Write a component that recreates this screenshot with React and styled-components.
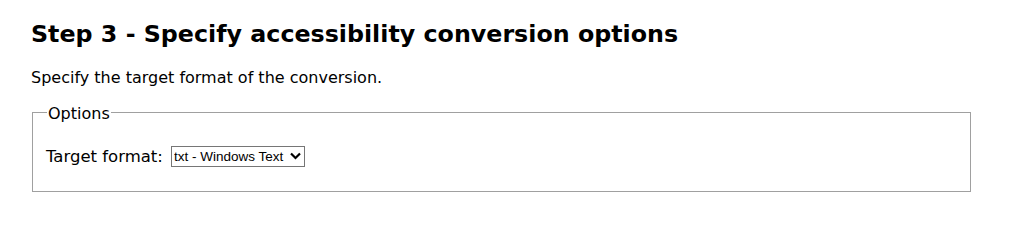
import React from "react"
import styled, { createGlobalStyle } from "styled-components"

const GlobalStyle = createGlobalStyle`
  html, body {
    margin: 0;
    padding: 0;
    background: #ffffff;
  }
  body {
    font-family: Verdana, "DejaVu Sans", sans-serif;
    color: #000000;
  }
`

const Page = styled.div`
  padding: 16px 55px 0 31px;
`

const Title = styled.h2`
  margin: 0;
  font-size: 23.75px;
  line-height: 36px;
  font-weight: bold;
`

const Intro = styled.p`
  margin: 16px 0 13px;
  font-size: 16px;
  line-height: 20px;
`

const Options = styled.fieldset`
  margin: 0 0 0 1px;
  padding: 23px 13px 24px;
  border: 1px solid #a0a0a0;
`

const Legend = styled.legend`
  padding: 4px 1px 0;
  margin-left: 1px;
  font-size: 16px;
  line-height: 18px;
`

const Row = styled.div`
  display: flex;
  align-items: center;
  gap: 8px;
  font-size: 16.5px;
`

const SelectWrap = styled.span`
  position: relative;
  display: inline-flex;
`

const Select = styled.select`
  appearance: none;
  height: 21px;
  width: 134px;
  padding: 0 18px 0 2px;
  border: 1px solid #767676;
  border-radius: 0;
  background: #ffffff;
  color: #000000;
  font-family: "Liberation Sans", Arial, sans-serif;
  font-size: 13.5px;
`

const Chevron = styled.svg`
  position: absolute;
  right: 4px;
  top: 6px;
  pointer-events: none;
`

const App = () => {
  return (
    <Page>
      <GlobalStyle />
      <Title>Step 3 - Specify accessibility conversion options</Title>
      <Intro>Specify the target format of the conversion.</Intro>
      <Options>
        <Legend>Options</Legend>
        <Row>
          <label htmlFor="format">Target format:</label>
          <SelectWrap>
            <Select id="format" defaultValue="txt">
              <option value="txt">txt - Windows Text</option>
            </Select>
            <Chevron width="11" height="8" viewBox="0 0 11 8">
              <path d="M1 1.5 L5.5 6 L10 1.5" fill="none" stroke="#000" strokeWidth="2.2" />
            </Chevron>
          </SelectWrap>
        </Row>
      </Options>
    </Page>
  )
}

export default App
